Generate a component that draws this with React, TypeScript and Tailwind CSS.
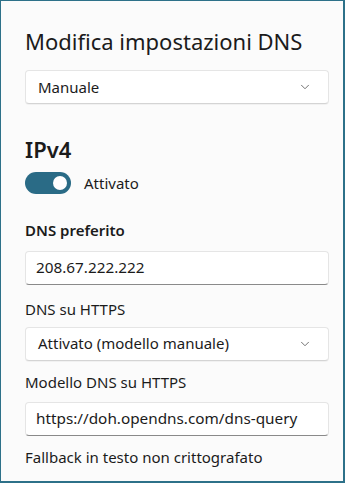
import { ChevronDown } from "lucide-react";

const font = { fontFamily: '"Segoe UI", "Noto Sans", "Open Sans", sans-serif' };

function Select({ value }: { value: string }) {
  return (
    <div className="flex h-[34px] items-center justify-between rounded-[4px] border border-[#e5e5e5] border-b-[#d4d4d4] bg-white pl-[12px] pr-[16px] shadow-[0_1px_0_rgba(0,0,0,0.04)]">
      <span className="text-[15px] text-[#1b1b1b]">{value}</span>
      <ChevronDown className="h-[14px] w-[14px] text-[#5f5f5f]" strokeWidth={1.5} />
    </div>
  );
}

function Field({ value }: { value: string }) {
  return (
    <div className="flex h-[34px] items-center rounded-[4px] border border-[#e5e5e5] border-b-[#8a8a8a] bg-white px-[10px]">
      <span className="text-[15.3px] text-[#1b1b1b]">{value}</span>
    </div>
  );
}

export default function App() {
  return (
    <div
      style={font}
      className="h-[483px] w-[345px] overflow-hidden border-t border-l border-r-2 border-b-2 border-[#2d7189] bg-[#fbfbfb] text-[#1b1b1b]"
    >
      <div className="flex flex-col pl-[24px] pr-[14px] pt-[25px]">
        <h1 className="text-[22px] leading-[30px] font-normal">Modifica impostazioni DNS</h1>
        <div className="mt-[14px]">
          <Select value="Manuale" />
        </div>

        <h2 className="mt-[30px] text-[22px] leading-[30px] font-semibold">IPv4</h2>
        <div className="mt-[8px] flex items-center gap-[13px]">
          <div className="flex h-[22px] w-[46px] items-center justify-end rounded-full bg-[#2a6b86] pr-[4px]">
            <div className="h-[14px] w-[14px] rounded-full bg-white" />
          </div>
          <span className="text-[15px]">Attivato</span>
        </div>

        <div className="mt-[25px] text-[15px] font-semibold leading-[20px]">DNS preferito</div>
        <div className="mt-[11px]">
          <Field value="208.67.222.222" />
        </div>

        <div className="mt-[14px] text-[15px] leading-[20px]">DNS su HTTPS</div>
        <div className="mt-[8px]">
          <Select value="Attivato (modello manuale)" />
        </div>

        <div className="mt-[11px] text-[15px] leading-[20px]">Modello DNS su HTTPS</div>
        <div className="mt-[10px]">
          <Field value="https://doh.opendns.com/dns-query" />
        </div>

        <div className="mt-[11px] text-[15px] leading-[20px]">Fallback in testo non crittografato</div>
      </div>
    </div>
  );
}
